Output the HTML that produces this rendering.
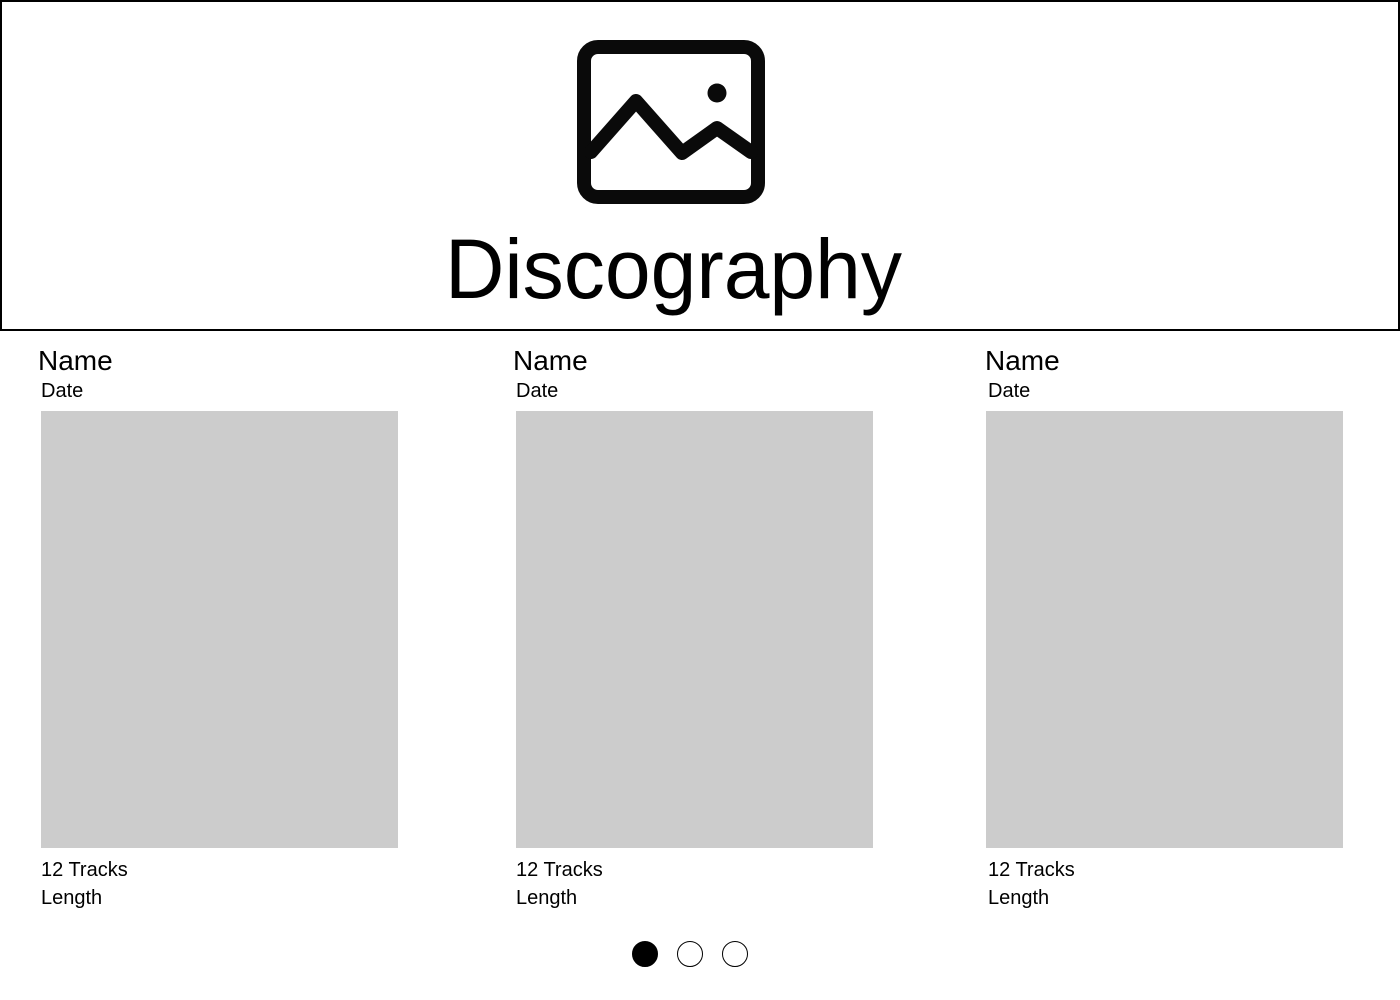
<!DOCTYPE html>
<html><head><style>
body{margin:0;width:1400px;height:1000px;background:#fff;position:relative;overflow:hidden;font-family:"Liberation Sans",sans-serif;color:#000}
.hdr{position:absolute;left:0;top:0;width:1396px;height:327px;border:2px solid #000}
.a{position:absolute}
.name{font-size:28px;line-height:30px}
.sm{font-size:20px;line-height:22px}
.img{background:#ccc;width:357px;height:437px}
.dot{position:absolute;top:941px;width:24px;height:24px;border:1.5px solid #000;border-radius:50%;box-sizing:content-box}
</style></head><body>
<div class="hdr"></div>
<svg class="a" style="left:0;top:0" width="1400" height="330">
<rect x="584" y="47" width="174" height="150" rx="14" fill="none" stroke="#0a0a0a" stroke-width="14"/>
<path d="M591 152 L636 101 L682 153 L717 128 L751 152" fill="none" stroke="#0a0a0a" stroke-width="14" stroke-linejoin="round" stroke-linecap="round"/>
<circle cx="717" cy="93" r="9.5" fill="#0a0a0a"/>
<text x="445" y="298" font-size="84" textLength="457" lengthAdjust="spacingAndGlyphs" font-family="Liberation Sans, sans-serif">Discography</text>
</svg>

<div class="a name" style="left:38px;top:346px">Name</div>
<div class="a sm" style="left:41px;top:380px">Date</div>
<div class="a img" style="left:41px;top:411px"></div>
<div class="a sm" style="left:41px;top:859px">12 Tracks</div>
<div class="a sm" style="left:41px;top:887px">Length</div>

<div class="a name" style="left:513px;top:346px">Name</div>
<div class="a sm" style="left:516px;top:380px">Date</div>
<div class="a img" style="left:516px;top:411px"></div>
<div class="a sm" style="left:516px;top:859px">12 Tracks</div>
<div class="a sm" style="left:516px;top:887px">Length</div>

<div class="a name" style="left:985px;top:346px">Name</div>
<div class="a sm" style="left:988px;top:380px">Date</div>
<div class="a img" style="left:986px;top:411px"></div>
<div class="a sm" style="left:988px;top:859px">12 Tracks</div>
<div class="a sm" style="left:988px;top:887px">Length</div>

<div class="dot" style="left:632px;background:#000"></div>
<div class="dot" style="left:677px"></div>
<div class="dot" style="left:722px"></div>
</body></html>
